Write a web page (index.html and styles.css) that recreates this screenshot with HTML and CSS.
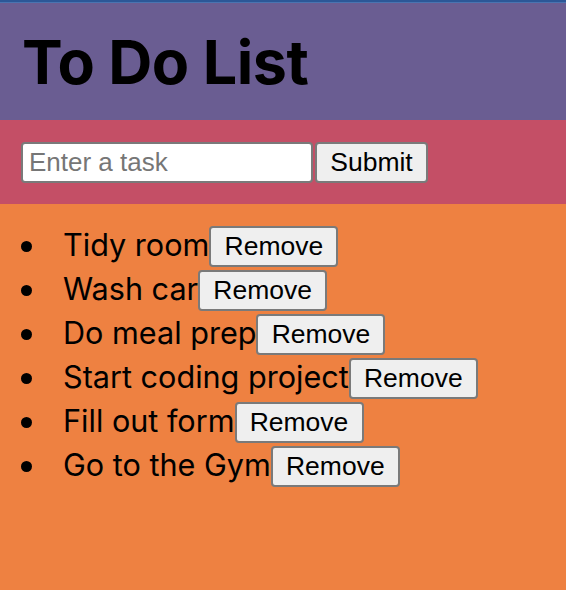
FILE: index.html
```html
<!DOCTYPE html>
<html>
<head>
<meta charset="utf-8">
<link rel="stylesheet" href="styles.css">
</head>
<body>
<div class="topline"></div>
<header class="header"><h1 class="title">To Do List</h1></header>
<form class="task-form">
  <input class="task-input" type="text" placeholder="Enter a task"><button class="btn btn-submit" type="button">Submit</button>
</form>
<main class="list-area">
  <ul class="task-list">
    <li class="task"><span class="task-text">Tidy room</span><button class="btn">Remove</button></li>
    <li class="task"><span class="task-text">Wash car</span><button class="btn">Remove</button></li>
    <li class="task"><span class="task-text">Do meal prep</span><button class="btn">Remove</button></li>
    <li class="task"><span class="task-text">Start coding project</span><button class="btn">Remove</button></li>
    <li class="task"><span class="task-text">Fill out form</span><button class="btn">Remove</button></li>
    <li class="task"><span class="task-text">Go to the Gym</span><button class="btn">Remove</button></li>
  </ul>
</main>
</body>
</html>
```
FILE: styles.css
```css
html, body {
  margin: 0;
  padding: 0;
  height: 100%;
}
body {
  background: #ee8141;
  font-family: Inter, "Noto Sans", sans-serif;
  display: flex;
  flex-direction: column;
}
.topline {
  height: 3px;
  background: linear-gradient(#2c5797 0 2px, #4a74b0 2px 3px);
}
.header {
  background: #6a5d92;
  height: 117px;
  padding: 0 22px;
  box-sizing: border-box;
}
.title {
  margin: 0;
  font-size: 61px;
  font-weight: 700;
  line-height: 118px;
  color: #000;
  letter-spacing: -0.5px;
}
.task-form {
  margin: 0;
  background: #c44f66;
  height: 84px;
  box-sizing: border-box;
  padding: 22px 21px 0;
  display: flex;
  align-items: flex-start;
}
.task-input {
  width: 292px;
  height: 41px;
  box-sizing: border-box;
  border: 2px solid #7a7a7a;
  border-radius: 4px;
  background: #fff;
  font-family: "Liberation Sans", Arial, sans-serif;
  font-size: 26px;
  padding: 0 6px;
  margin: 0 2px 0 0;
  outline: none;
}
.task-input::placeholder {
  color: #767676;
}
.btn {
  height: 41px;
  box-sizing: border-box;
  border: 2px solid #7a7a7a;
  border-radius: 4px;
  background: #efefef;
  color: #000;
  font-family: "Liberation Sans", Arial, sans-serif;
  font-size: 26.5px;
  padding: 0 12px;
  margin: 0;
}
.btn-submit {
  width: 113px;
}
.list-area {
  flex: 1;
}
.task-list {
  margin: 20px 0 0;
  padding: 0;
  list-style: none;
}
.task {
  display: flex;
  align-items: center;
  font-size: 30.6px;
  height: 44px;
  color: #000;
}
.task::before {
  content: "";
  width: 11px;
  height: 11px;
  border-radius: 50%;
  background: #000;
  margin: 0 31px 0 21px;
  flex: none;
}
.task-text {
  position: relative;
  top: -2px;
}
.task .btn {
  width: 129px;
  flex: none;
}
```
